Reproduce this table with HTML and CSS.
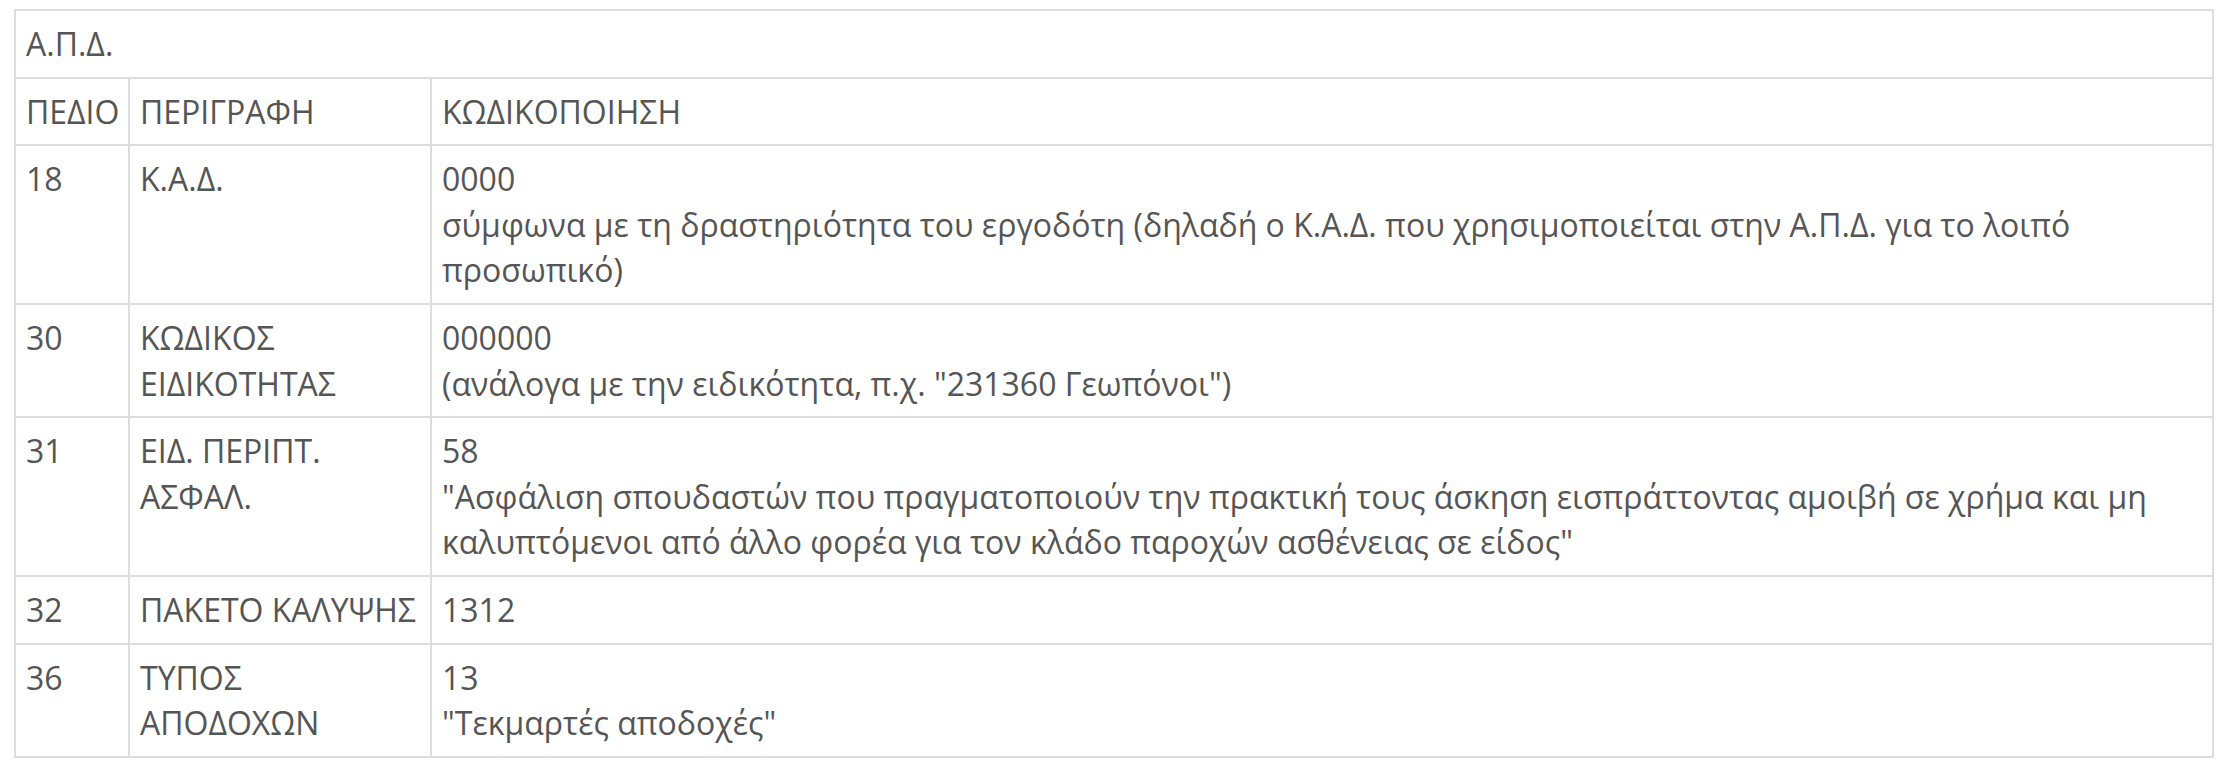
FILE: index.html
```html
<!DOCTYPE html>
<html lang="el">
<head>
<meta charset="utf-8">
<title>Α.Π.Δ.</title>
<link rel="stylesheet" href="styles.css">
</head>
<body>
<table class="apd">
  <colgroup>
    <col class="c-field">
    <col class="c-desc">
    <col class="c-code">
  </colgroup>
  <tbody>
    <tr><td colspan="3">Α.Π.Δ.</td></tr>
    <tr><td>ΠΕΔΙΟ</td><td>ΠΕΡΙΓΡΑΦΗ</td><td>ΚΩΔΙΚΟΠΟΙΗΣΗ</td></tr>
    <tr><td>18</td><td>Κ.Α.Δ.</td><td>0000<br>σύμφωνα με τη δραστηριότητα του εργοδότη (δηλαδή ο Κ.Α.Δ. που χρησιμοποιείται στην Α.Π.Δ. για το λοιπό προσωπικό)</td></tr>
    <tr><td>30</td><td>ΚΩΔΙΚΟΣ ΕΙΔΙΚΟΤΗΤΑΣ</td><td>000000<br>(ανάλογα με την ειδικότητα, π.χ. "231360 Γεωπόνοι")</td></tr>
    <tr><td>31</td><td>ΕΙΔ. ΠΕΡΙΠΤ. ΑΣΦΑΛ.</td><td>58<br>"Ασφάλιση σπουδαστών που πραγματοποιούν την πρακτική τους άσκηση εισπράττοντας αμοιβή σε χρήμα και μη καλυπτόμενοι από άλλο φορέα για τον κλάδο παροχών ασθένειας σε είδος"</td></tr>
    <tr><td>32</td><td>ΠΑΚΕΤΟ ΚΑΛΥΨΗΣ</td><td>1312</td></tr>
    <tr><td>36</td><td>ΤΥΠΟΣ ΑΠΟΔΟΧΩΝ</td><td>13<br>"Τεκμαρτές αποδοχές"</td></tr>
  </tbody>
</table>
</body>
</html>
```

FILE: styles.css
```css
html, body {
  margin: 0;
  padding: 0;
  background: #ffffff;
}

body {
  font-family: "Open Sans", "Noto Sans", sans-serif;
  font-size: 32px;
  line-height: 45.6px;
  color: #555555;
}

.apd {
  margin: 9px 0 0 14px;
  width: 2200px;
  table-layout: fixed;
  border-collapse: separate;
  border-spacing: 0;
  border-left: 2px solid #dddddd;
  border-top: 2px solid #dddddd;
}

.c-field { width: 114px; }
.c-desc { width: 302px; }
.c-code { width: auto; }

.apd td {
  padding: 10px 10px;
  vertical-align: top;
  text-align: left;
  border-right: 2px solid #dddddd;
  border-bottom: 2px solid #dddddd;
}
```
